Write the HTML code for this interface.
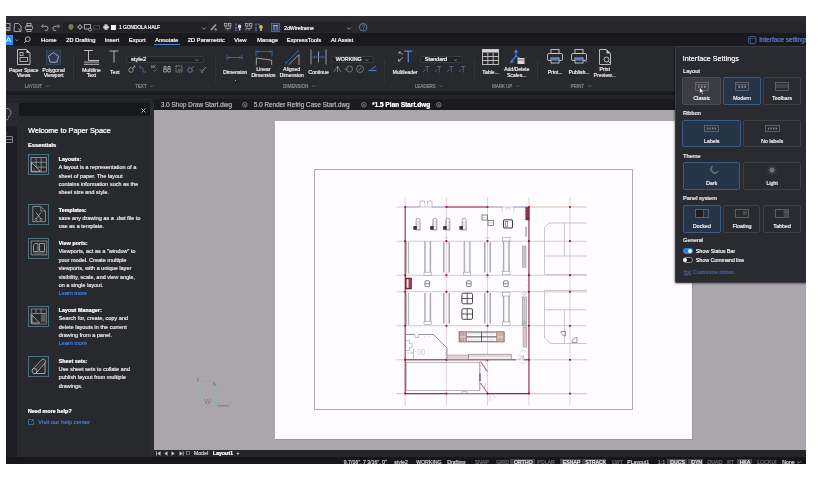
<!DOCTYPE html>
<html><head><meta charset="utf-8">
<style>
html,body{margin:0;padding:0;background:#fff;}
body{width:823px;height:477px;position:relative;overflow:hidden;font-family:"Liberation Sans",sans-serif;}
#app{position:absolute;left:6px;top:16px;width:800px;height:448px;overflow:hidden;background:#28292d;}
#in{will-change:transform;position:absolute;left:-6px;top:-16px;width:823px;height:477px;}
.a{position:absolute;}
.t{position:absolute;white-space:nowrap;line-height:1;text-shadow:0.3px 0 0 currentColor;}
svg{position:absolute;overflow:visible;}
</style></head><body>
<div id="app"><div id="in">
<div class="a" style="left:0px;top:16px;width:823px;height:5px;background:#2d2c31;"></div>
<div class="a" style="left:0px;top:21px;width:823px;height:12px;background:#28272c;"></div>
<div class="a" style="left:0px;top:33px;width:823px;height:13px;background:#1a191e;"></div>
<div class="a" style="left:0px;top:46px;width:823px;height:45px;background:#28292d;"></div>
<div class="a" style="left:0px;top:91px;width:823px;height:4px;background:#191a1f;"></div>
<div class="a" style="left:0px;top:95px;width:823px;height:8px;background:#232428;"></div>
<div class="a" style="left:6px;top:99px;width:146px;height:1px;background:repeating-linear-gradient(90deg,#303136 0 1px,transparent 1px 2px)"></div>
<svg style="left:6px;top:23px;" width="5" height="8" viewBox="0 0 5 8" fill="none"><rect x="-2" y="0.5" width="6" height="7" stroke="#bdbdc0" stroke-width="0.8"/><rect x="0" y="4.5" width="3" height="2" stroke="#bdbdc0" stroke-width="0.6"/></svg>
<svg style="left:14px;top:23px;" width="8" height="9" viewBox="0 0 8 9" fill="none"><path d="M0.5 0.5h4l2.5 2.5v5.5h-7z" stroke="#bdbdc0" stroke-width="0.8"/><path d="M4.5 5.5l2 2.5" stroke="#bdbdc0" stroke-width="0.8"/></svg>
<svg style="left:25px;top:23px;" width="9" height="9" viewBox="0 0 9 9" fill="none"><rect x="2" y="0.5" width="4" height="2.5" stroke="#bdbdc0" stroke-width="0.8"/><rect x="0.5" y="3" width="7" height="3.5" rx="0.8" stroke="#bdbdc0" stroke-width="0.8"/><rect x="2" y="6.5" width="4" height="2" stroke="#bdbdc0" stroke-width="0.8"/></svg>
<div class="a" style="left:37px;top:23px;width:1px;height:9px;background:#2e2e31;"></div>
<svg style="left:41px;top:23px;" width="8" height="8" viewBox="0 0 8 8" fill="none"><path d="M2 1.5L0.6 3.2L2 4.8" stroke="#bdbdc0" stroke-width="0.8"/><path d="M0.8 3.2h4a2.2 2.2 0 0 1 0 4.4h-1" stroke="#bdbdc0" stroke-width="0.8"/></svg>
<svg style="left:52px;top:23px;" width="8" height="8" viewBox="0 0 8 8" fill="none"><path d="M6 1.5L7.4 3.2L6 4.8" stroke="#bdbdc0" stroke-width="0.8"/><path d="M7.2 3.2h-4a2.2 2.2 0 0 0 0 4.4h1" stroke="#bdbdc0" stroke-width="0.8"/></svg>
<div class="a" style="left:63px;top:22px;width:145px;height:10px;background:#222126;"></div>
<svg style="left:68px;top:24px;" width="6" height="6" viewBox="0 0 6 6" fill="none"><ellipse cx="3" cy="2.6" rx="2.6" ry="2.6" fill="#7d7a4e"/><rect x="1.8" y="4.6" width="2.4" height="1.4" fill="#6e6c48"/></svg>
<svg style="left:77px;top:24px;" width="6" height="6" viewBox="0 0 6 6" fill="none"><circle cx="3" cy="3" r="1.6" stroke="#bdbdc0" stroke-width="0.8"/><path d="M3 0v1M3 5v1M0 3h1M5 3h1" stroke="#bdbdc0" stroke-width="0.8"/></svg>
<svg style="left:84px;top:24px;" width="8" height="7" viewBox="0 0 8 7" fill="none"><rect x="0.5" y="0.5" width="6" height="4.5" stroke="#bdbdc0" stroke-width="0.8"/><circle cx="6" cy="5.5" r="1.5" fill="#232326" stroke="#bdbdc0" stroke-width="0.8"/></svg>
<svg style="left:93px;top:25px;" width="7" height="5" viewBox="0 0 7 5" fill="none"><rect x="0.5" y="0.5" width="6" height="4" stroke="#4a4a4e" stroke-width="0.8"/></svg>
<svg style="left:103px;top:24px;" width="6" height="6" viewBox="0 0 6 6" fill="none"><rect x="1.5" y="0.3" width="3" height="2" fill="#d0d0d3"/><rect x="0.2" y="2" width="5.6" height="2.6" rx="0.6" fill="#d0d0d3"/><rect x="1.5" y="4" width="3" height="1.8" fill="#d0d0d3"/></svg>
<div class="a" style="left:111px;top:25px;width:4.5px;height:4.5px;background:#f2f2f2;"></div>
<div class="t" style="left:119px;top:25.88px;font-size:4.75px;color:#f0f0f0;font-weight:400;text-shadow:0.35px 0 0 currentColor">1 GONDOLA HALF</div>
<svg style="left:201.5px;top:27px;" width="4" height="3" viewBox="0 0 4 3" fill="none"><path d="M0.3 0.5L2 2.2L3.7 0.5" stroke="#bdbdc0" stroke-width="0.7"/></svg>
<svg style="left:210px;top:23px;" width="7" height="8" viewBox="0 0 7 8" fill="none"><path d="M1 7L6 1.5" stroke="#9da0c0" stroke-width="1.6"/><path d="M4.5 6.5h2.5M5.7 5.3v2.5" stroke="#c9c27a" stroke-width="0.7"/></svg>
<svg style="left:224px;top:23px;" width="8" height="8" viewBox="0 0 8 8" fill="none"><rect x="0.5" y="0.5" width="2.5" height="2.5" stroke="#bdbdc0" stroke-width="0.7"/><rect x="4.5" y="0.5" width="2.5" height="2.5" stroke="#bdbdc0" stroke-width="0.7"/><path d="M1.8 3v2.5h4.5V3M4 5.5v2" stroke="#bdbdc0" stroke-width="0.7"/></svg>
<svg style="left:235px;top:23px;" width="7" height="8" viewBox="0 0 7 8" fill="none"><rect x="0" y="0.5" width="2" height="2" fill="#5262a8"/><rect x="0" y="4" width="2" height="2" fill="#5262a8"/><rect x="0" y="6.5" width="2" height="1.5" fill="#5262a8"/><ellipse cx="4.6" cy="3.5" rx="1.7" ry="2" fill="#d8d8da"/><rect x="3.8" y="5.5" width="1.6" height="2" fill="#d8d8da"/></svg>
<svg style="left:245px;top:23px;" width="8" height="8" viewBox="0 0 8 8" fill="none"><rect x="0.5" y="0.5" width="2.5" height="2.5" stroke="#bdbdc0" stroke-width="0.7"/><rect x="4.5" y="0.5" width="2.5" height="2.5" stroke="#bdbdc0" stroke-width="0.7"/><path d="M1.8 3v2.5h4.5V3M4 5.5v2" stroke="#bdbdc0" stroke-width="0.7"/><rect x="0" y="5.5" width="2" height="2" fill="#5262a8"/></svg>
<svg style="left:255px;top:23px;" width="9" height="8" viewBox="0 0 9 8" fill="none"><rect x="0" y="0.5" width="2" height="2" fill="#5262a8"/><rect x="3" y="0.5" width="2" height="2" fill="#5262a8"/><rect x="0" y="4" width="2" height="2" fill="#5262a8"/><rect x="0" y="6.5" width="2" height="1.5" fill="#5262a8"/><ellipse cx="6" cy="4" rx="1.8" ry="2" fill="#e0c04a"/><rect x="5.2" y="6" width="1.6" height="1.8" fill="#d8d8da"/></svg>
<div class="a" style="left:268px;top:23px;width:1px;height:9px;background:#2e2e31;"></div>
<svg style="left:271px;top:23px;" width="9" height="9" viewBox="0 0 9 9" fill="none"><rect x="0.5" y="0.5" width="8" height="8" fill="#243a66" stroke="#4b72c0" stroke-width="0.8"/><path d="M2 2.5h5M3 2.5v5M6 2.5v5" stroke="#c8d4f0" stroke-width="0.7"/></svg>
<div class="a" style="left:281px;top:22px;width:70px;height:10px;background:#222126;"></div>
<div class="t" style="left:284px;top:25.5px;font-size:5.2px;color:#f0f0f0;font-weight:400;text-shadow:0.35px 0 0 currentColor">2dWireframe</div>
<svg style="left:346.5px;top:27px;" width="4" height="3" viewBox="0 0 4 3" fill="none"><path d="M0.3 0.5L2 2.2L3.7 0.5" stroke="#bdbdc0" stroke-width="0.7"/></svg>
<div class="a" style="left:356px;top:23px;width:1px;height:9px;background:#2e2e31;"></div>
<svg style="left:359px;top:23px;" width="9" height="9" viewBox="0 0 9 9" fill="none"><circle cx="4.2" cy="4.2" r="3.8" stroke="#6f86c8" stroke-width="0.8"/><path d="M3 3.2a1.3 1.3 0 1 1 1.5 1.3v0.9" stroke="#6f86c8" stroke-width="0.7"/><circle cx="4.5" cy="6.4" r="0.4" fill="#6f86c8"/></svg>
<div class="a" style="left:6px;top:35px;width:7px;height:10px;background:#2f8ff0;"></div>
<svg style="left:6px;top:37px;" width="7" height="6" viewBox="0 0 7 6" fill="none"><path d="M0.3 5L2.5 0.4L4.7 5M1.6 3.6h1" stroke="#e4f4ff" stroke-width="1"/></svg>
<svg style="left:14.5px;top:39px;" width="4" height="3" viewBox="0 0 4 3" fill="none"><path d="M0.3 0.5L1.8 1.8L3.3 0.5" stroke="#8a8a8e" stroke-width="0.8"/></svg>
<svg style="left:23px;top:36px;" width="8" height="8" viewBox="0 0 8 8" fill="none"><circle cx="4.8" cy="3.2" r="2.4" stroke="#c4c4c8" stroke-width="0.9"/><path d="M3.1 4.9L1.1 6.9" stroke="#c4c4c8" stroke-width="1"/></svg>
<div class="t" style="left:41px;top:37.89px;font-size:5.8px;color:#ececee;font-weight:400;text-shadow:0.35px 0 0 currentColor">Home</div>
<div class="t" style="left:66px;top:37.89px;font-size:5.8px;color:#ececee;font-weight:400;text-shadow:0.35px 0 0 currentColor">2D Drafting</div>
<div class="t" style="left:104.6px;top:37.89px;font-size:5.8px;color:#ececee;font-weight:400;text-shadow:0.35px 0 0 currentColor">Insert</div>
<div class="t" style="left:128.7px;top:37.89px;font-size:5.8px;color:#ececee;font-weight:400;text-shadow:0.35px 0 0 currentColor">Export</div>
<div class="t" style="left:155px;top:37.89px;font-size:5.8px;color:#ececee;font-weight:400;text-shadow:0.35px 0 0 currentColor">Annotate</div>
<div class="t" style="left:187.5px;top:37.89px;font-size:5.8px;color:#ececee;font-weight:400;text-shadow:0.35px 0 0 currentColor">2D Parametric</div>
<div class="t" style="left:234px;top:37.89px;font-size:5.8px;color:#ececee;font-weight:400;text-shadow:0.35px 0 0 currentColor">View</div>
<div class="t" style="left:257px;top:37.89px;font-size:5.8px;color:#ececee;font-weight:400;text-shadow:0.35px 0 0 currentColor">Manage</div>
<div class="t" style="left:286.6px;top:37.89px;font-size:5.8px;color:#ececee;font-weight:400;text-shadow:0.35px 0 0 currentColor">ExpressTools</div>
<div class="t" style="left:330.8px;top:37.89px;font-size:5.8px;color:#ececee;font-weight:400;text-shadow:0.35px 0 0 currentColor">AI Assist</div>
<div class="a" style="left:153.5px;top:44px;width:26px;height:1.1px;background:#4a88e0;"></div>
<svg style="left:748.3px;top:36.2px;" width="8.5" height="8" viewBox="0 0 8.5 8" fill="none"><rect x="0.5" y="0.5" width="7.5" height="7" rx="1.2" stroke="#4a5e9a" stroke-width="0.9"/><path d="M0.5 2.3h7.5M2.3 2.3v5.2" stroke="#4a5e9a" stroke-width="0.7"/></svg>
<div class="t" style="left:759px;top:36.98px;font-size:6.4px;color:#5576c4;font-weight:400;text-shadow:0.4px 0 0 currentColor">Interface settings</div>
<svg style="left:17px;top:49px;" width="14" height="16" viewBox="0 0 14 16" fill="none"><path d="M0.5 0.5h9l3.5 3.5v11.5h-12.5z" stroke="#c8c8cb" stroke-width="0.9"/><path d="M9.5 0.5v3.5h3.5z" fill="#c8c8cb"/><rect x="3" y="3.5" width="3" height="3" stroke="#c8c8cb" stroke-width="0.8"/><rect x="3" y="8.5" width="7.5" height="4" stroke="#c8c8cb" stroke-width="0.8"/></svg>
<svg style="left:46px;top:50px;" width="15" height="15" viewBox="0 0 15 15" fill="none"><rect x="0.5" y="0.5" width="14" height="14" fill="#2c384c" stroke="#3a4c6c" stroke-width="0.8"/><path d="M7.5 2.6L12.6 6.3L10.7 12.2H4.3L2.4 6.3Z" stroke="#c0c6d2" stroke-width="0.8"/></svg>
<div class="t" style="left:-176.4px;width:400px;text-align:center;top:67.54px;font-size:5.1px;color:#e4e4e6;font-weight:400;">Paper Space</div>
<div class="t" style="left:-176.4px;width:400px;text-align:center;top:72.74px;font-size:5.1px;color:#e4e4e6;font-weight:400;">Views</div>
<div class="t" style="left:-146.5px;width:400px;text-align:center;top:67.54px;font-size:5.1px;color:#e4e4e6;font-weight:400;">Polygonal</div>
<div class="t" style="left:-146.5px;width:400px;text-align:center;top:72.74px;font-size:5.1px;color:#e4e4e6;font-weight:400;">Viewport</div>
<div class="t" style="left:24.6px;top:84.63px;font-size:4.45px;color:#85858a;font-weight:400;">LAYOUT</div>
<svg style="left:45.9796px;top:85.3px;" width="4" height="3" viewBox="0 0 4 3" fill="none"><path d="M0.3 0.4L1.7 1.8L3.1 0.4" stroke="#8a8a8f" stroke-width="0.65"/></svg>
<div class="a" style="left:73px;top:56px;width:1px;height:26px;background:#33343a;"></div>
<svg style="left:83px;top:49px;" width="17" height="17" viewBox="0 0 17 17" fill="none"><path d="M1 1.5h9M5.5 1.5v10h10.5M1 13h15M1 15.3h15" stroke="#c8c8cb" stroke-width="0.9"/></svg>
<svg style="left:109px;top:50px;" width="10" height="13" viewBox="0 0 10 13" fill="none"><path d="M0.5 1h9M5 1v11.5" stroke="#c8c8cb" stroke-width="0.9"/></svg>
<div class="t" style="left:-108.7px;width:400px;text-align:center;top:67.54px;font-size:5.1px;color:#e4e4e6;font-weight:400;">Multiline</div>
<div class="t" style="left:-108.7px;width:400px;text-align:center;top:72.74px;font-size:5.1px;color:#e4e4e6;font-weight:400;">Text</div>
<div class="t" style="left:-85.3px;width:400px;text-align:center;top:70.24px;font-size:5.1px;color:#e4e4e6;font-weight:400;">Text</div>
<div class="a" style="left:126px;top:56px;width:78px;height:7px;background:#222327;border:1px solid #3a3b40;box-sizing:border-box;border-radius:2px;"></div>
<div class="t" style="left:130.7px;top:56.85px;font-size:5.85px;color:#f0f0f2;font-weight:400;text-shadow:0.45px 0 0 currentColor">style2</div>
<svg style="left:195px;top:58.8px;" width="4" height="3" viewBox="0 0 4 3" fill="none"><path d="M0.3 0.4L1.7 1.8L3.1 0.4" stroke="#bdbdc0" stroke-width="0.65"/></svg>
<svg style="left:128px;top:65px;" width="8" height="8" viewBox="0 0 8 8" fill="none"><circle cx="3" cy="5" r="2.3" stroke="#b8b8bb" stroke-width="0.7"/><path d="M4.6 3.4L7 1M5.5 1H7v1.5" stroke="#b8b8bb" stroke-width="0.7"/></svg>
<svg style="left:139px;top:65px;" width="8" height="8" viewBox="0 0 8 8" fill="none"><path d="M1 1v2h3M4 3v4h3" stroke="#5a6890" stroke-width="0.8"/><circle cx="1" cy="1" r="0.6" fill="#5a6890"/><circle cx="7" cy="7" r="0.6" fill="#5a6890"/></svg>
<svg style="left:151px;top:65px;" width="8" height="8" viewBox="0 0 8 8" fill="none"><text x="0" y="3" font-size="2.6" fill="#b0b0b3" font-family="Liberation Sans">ABC</text><path d="M2 5l1.5 1.5L6.5 3.5" stroke="#707078" stroke-width="0.6"/></svg>
<svg style="left:163px;top:65px;" width="8" height="8" viewBox="0 0 8 8" fill="none"><circle cx="2" cy="5.5" r="1.6" stroke="#c0c0c3" stroke-width="0.8"/><circle cx="6" cy="5.5" r="1.6" stroke="#c0c0c3" stroke-width="0.8"/><path d="M1 4V1.5h2V4M5 4V1.5h2V4" stroke="#c0c0c3" stroke-width="0.8"/></svg>
<svg style="left:175px;top:65px;" width="8" height="8" viewBox="0 0 8 8" fill="none"><rect x="1" y="1" width="6" height="6" stroke="#b8b8bb" stroke-width="0.7" stroke-dasharray="1.5 0.8"/><path d="M3 5h3" stroke="#b8b8bb" stroke-width="0.7"/></svg>
<svg style="left:187px;top:65px;" width="8" height="8" viewBox="0 0 8 8" fill="none"><circle cx="3" cy="5" r="2.3" stroke="#8090b8" stroke-width="0.7"/><path d="M4.6 3.4L7 1" stroke="#8090b8" stroke-width="0.7"/><path d="M1 1l6 6" stroke="#5a6890" stroke-width="0.5"/></svg>
<svg style="left:199px;top:65px;" width="8" height="8" viewBox="0 0 8 8" fill="none"><path d="M1 4.5l2 2L7 2" stroke="#b8b8bb" stroke-width="0.7"/><path d="M3 6.5V8" stroke="#b8b8bb" stroke-width="0.7"/></svg>
<div class="t" style="left:135px;top:84.63px;font-size:4.45px;color:#85858a;font-weight:400;">TEXT</div>
<svg style="left:150.2742px;top:85.3px;" width="4" height="3" viewBox="0 0 4 3" fill="none"><path d="M0.3 0.4L1.7 1.8L3.1 0.4" stroke="#8a8a8f" stroke-width="0.65"/></svg>
<div class="a" style="left:214.8px;top:56px;width:1px;height:26px;background:#33343a;"></div>
<svg style="left:226px;top:54px;" width="17" height="7" viewBox="0 0 17 7" fill="none"><path d="M1 3.5h15M1 0.8v5.4M16 0.8v5.4" stroke="#3b6cc0" stroke-width="0.8"/><path d="M1.5 3.5l2.3-1.3v2.6zM15.5 3.5l-2.3-1.3v2.6z" fill="#3b6cc0"/></svg>
<div class="t" style="left:35px;width:400px;text-align:center;top:69.54px;font-size:5.1px;color:#e4e4e6;font-weight:400;">Dimension</div>
<div class="a" style="left:234.5px;top:79.6px;width:1.2px;height:1.2px;background:#aaaaae;"></div>
<svg style="left:255px;top:49px;" width="18" height="17" viewBox="0 0 18 17" fill="none"><path d="M1 2.5h16M1 0.5v7M17 0.5v7" stroke="#3b6cc0" stroke-width="0.8"/><path d="M1.5 2.5l2.3-1.3v2.6zM16.5 2.5l-2.3-1.3v2.6z" fill="#3b6cc0"/><path d="M1.3 16V9L16.7 11.2V16" stroke="#bcbcc0" stroke-width="0.8"/></svg>
<div class="t" style="left:63.30000000000001px;width:400px;text-align:center;top:67.24px;font-size:5.1px;color:#e4e4e6;font-weight:400;">Linear</div>
<div class="t" style="left:63.30000000000001px;width:400px;text-align:center;top:72.74px;font-size:5.1px;color:#e4e4e6;font-weight:400;">Dimension</div>
<svg style="left:284px;top:49px;" width="16" height="17" viewBox="0 0 16 17" fill="none"><path d="M2 14L14 2" stroke="#3b6cc0" stroke-width="0.8"/><path d="M0.8 12.8l2.4 2.4M12.8 0.8l2.4 2.4" stroke="#3b6cc0" stroke-width="0.8"/><path d="M5 15.5L15 5.5V16" stroke="#bcbcc0" stroke-width="0.8"/></svg>
<div class="t" style="left:91.5px;width:400px;text-align:center;top:67.24px;font-size:5.1px;color:#e4e4e6;font-weight:400;">Aligned</div>
<div class="t" style="left:91.5px;width:400px;text-align:center;top:72.74px;font-size:5.1px;color:#e4e4e6;font-weight:400;">Dimension</div>
<svg style="left:310px;top:49px;" width="17" height="16" viewBox="0 0 17 16" fill="none"><path d="M1 0.5v15M8.5 2.5v11M16 0.5v15" stroke="#b4b4b8" stroke-width="0.8"/><path d="M1 8h15" stroke="#3b6cc0" stroke-width="0.8"/><path d="M4.5 6.5v3M12 6.5v3" stroke="#3b6cc0" stroke-width="0.7"/></svg>
<div class="t" style="left:118.5px;width:400px;text-align:center;top:69.54px;font-size:5.1px;color:#e4e4e6;font-weight:400;">Continue</div>
<div class="a" style="left:331px;top:56px;width:43px;height:7px;background:#222327;border:1px solid #3a3b40;box-sizing:border-box;border-radius:2px;"></div>
<div class="t" style="left:335.5px;top:57.31px;font-size:5.3px;color:#f0f0f2;font-weight:400;text-shadow:0.45px 0 0 currentColor">WORKING</div>
<svg style="left:365px;top:58.8px;" width="4" height="3" viewBox="0 0 4 3" fill="none"><path d="M0.3 0.4L1.7 1.8L3.1 0.4" stroke="#bdbdc0" stroke-width="0.65"/></svg>
<svg style="left:333px;top:65px;" width="9" height="8" viewBox="0 0 9 8" fill="none"><path d="M1 7L4.5 1L8 7M4.5 1v6" stroke="#8e8e92" stroke-width="0.7"/></svg>
<svg style="left:344px;top:65px;" width="9" height="8" viewBox="0 0 9 8" fill="none"><circle cx="5.5" cy="4" r="3" stroke="#8e8e92" stroke-width="0.7"/><path d="M0.5 4h3" stroke="#8e8e92" stroke-width="0.7"/></svg>
<svg style="left:356px;top:65px;" width="8" height="8" viewBox="0 0 8 8" fill="none"><circle cx="4" cy="4" r="3.5" stroke="#8e8e92" stroke-width="0.7"/><path d="M2.5 5.5l3-3" stroke="#8e8e92" stroke-width="0.7"/></svg>
<svg style="left:368px;top:65px;" width="9" height="8" viewBox="0 0 9 8" fill="none"><path d="M0.5 5.5h8" stroke="#3d7fe0" stroke-width="1.2"/><path d="M3 4.5L8 1" stroke="#8e8e92" stroke-width="0.7"/></svg>
<div class="t" style="left:283px;top:84.63px;font-size:4.45px;color:#85858a;font-weight:400;">DIMENSION</div>
<svg style="left:312.11814999999996px;top:85.3px;" width="4" height="3" viewBox="0 0 4 3" fill="none"><path d="M0.3 0.4L1.7 1.8L3.1 0.4" stroke="#8a8a8f" stroke-width="0.65"/></svg>
<div class="a" style="left:384px;top:60px;width:1px;height:22px;background:#33343a;"></div>
<svg style="left:397px;top:50px;" width="16" height="13" viewBox="0 0 16 13" fill="none"><path d="M7.2 1.2h8.2M11.3 1.2v11.2" stroke="#4a88d8" stroke-width="1.3"/><path d="M6 4.5L2 2M2 2h2M2 2v2M6 7.5L1.5 11M1.5 11h2M1.5 11V9" stroke="#c8c8cb" stroke-width="0.7"/></svg>
<div class="t" style="left:205px;width:400px;text-align:center;top:69.54px;font-size:5.1px;color:#e4e4e6;font-weight:400;">Multileader</div>
<div class="a" style="left:420px;top:56px;width:43px;height:7px;background:#222327;border:1px solid #3a3b40;box-sizing:border-box;border-radius:2px;"></div>
<div class="t" style="left:424.6px;top:57.14px;font-size:5.5px;color:#f0f0f2;font-weight:400;text-shadow:0.45px 0 0 currentColor">Standard</div>
<svg style="left:454px;top:58.8px;" width="4" height="3" viewBox="0 0 4 3" fill="none"><path d="M0.3 0.4L1.7 1.8L3.1 0.4" stroke="#bdbdc0" stroke-width="0.65"/></svg>
<svg style="left:422px;top:65px;" width="8" height="8" viewBox="0 0 8 8" fill="none"><path d="M3 1.5h4.5M5.3 1.5v6M1 7l2.5-2.5" stroke="#5a6890" stroke-width="0.8"/></svg>
<svg style="left:434px;top:65px;" width="8" height="8" viewBox="0 0 8 8" fill="none"><path d="M3 1.5h4.5M5.3 1.5v6M1 7l2.5-2.5" stroke="#5a6890" stroke-width="0.8"/></svg>
<svg style="left:446px;top:65px;" width="8" height="8" viewBox="0 0 8 8" fill="none"><path d="M3 1.5h4.5M5.3 1.5v6M1 7l2.5-2.5" stroke="#5a6890" stroke-width="0.8"/></svg>
<svg style="left:458px;top:65px;" width="8" height="8" viewBox="0 0 8 8" fill="none"><path d="M3 1.5h4.5M5.3 1.5v6M1 7l2.5-2.5" stroke="#5a6890" stroke-width="0.8"/></svg>
<div class="t" style="left:414.8px;top:84.63px;font-size:4.45px;color:#85858a;font-weight:400;">LEADERS</div>
<svg style="left:439.47704999999996px;top:85.3px;" width="4" height="3" viewBox="0 0 4 3" fill="none"><path d="M0.3 0.4L1.7 1.8L3.1 0.4" stroke="#8a8a8f" stroke-width="0.65"/></svg>
<div class="a" style="left:473.7px;top:60px;width:1px;height:22px;background:#33343a;"></div>
<svg style="left:482px;top:49px;" width="17" height="16" viewBox="0 0 17 16" fill="none"><rect x="0.5" y="0.5" width="16" height="15" stroke="#c8c8cb" stroke-width="0.9"/><rect x="0.5" y="0.5" width="16" height="3" fill="#d8d8da"/><path d="M0.5 7.5h16M0.5 11.5h16M5.8 3.5v12M11.2 3.5v12" stroke="#c8c8cb" stroke-width="0.9"/></svg>
<div class="t" style="left:290.5px;width:400px;text-align:center;top:69.54px;font-size:5.1px;color:#e4e4e6;font-weight:400;">Table...</div>
<svg style="left:509px;top:48px;" width="16" height="17" viewBox="0 0 16 17" fill="none"><path d="M7 2v6L2 14" stroke="#3d7fe0" stroke-width="1.3"/><path d="M4.5 4.5L7 1.5L9.5 4.5z" fill="#3d7fe0"/><path d="M1 15.5l4-1.5-2.5-2.5z" fill="#3d7fe0"/><path d="M7 8l5 3" stroke="#3d7fe0" stroke-width="1.3"/><rect x="8.5" y="10" width="7" height="6" fill="#d8d8da"/><path d="M8.5 12h7" stroke="#28292d" stroke-width="0.6"/></svg>
<div class="t" style="left:316.70000000000005px;width:400px;text-align:center;top:67.24px;font-size:5.1px;color:#e4e4e6;font-weight:400;">Add/Delete</div>
<div class="t" style="left:316.70000000000005px;width:400px;text-align:center;top:72.74px;font-size:5.1px;color:#e4e4e6;font-weight:400;">Scales...</div>
<div class="t" style="left:492px;top:84.63px;font-size:4.45px;color:#85858a;font-weight:400;">MARK UP</div>
<svg style="left:516.1741999999999px;top:85.3px;" width="4" height="3" viewBox="0 0 4 3" fill="none"><path d="M0.3 0.4L1.7 1.8L3.1 0.4" stroke="#8a8a8f" stroke-width="0.65"/></svg>
<div class="a" style="left:537.4px;top:60px;width:1px;height:22px;background:#33343a;"></div>
<svg style="left:547px;top:49px;" width="16" height="15" viewBox="0 0 16 15" fill="none"><rect x="4" y="0.5" width="8" height="4" stroke="#c8c8cb" stroke-width="0.9"/><rect x="0.5" y="4.5" width="15" height="7" rx="1.5" stroke="#c8c8cb" stroke-width="0.9"/><rect x="4" y="9" width="8" height="5" fill="#28292d" stroke="#c8c8cb" stroke-width="0.9"/><rect x="4.5" y="9.5" width="7" height="2" fill="#3d8ff0"/></svg>
<svg style="left:571px;top:49px;" width="16" height="15" viewBox="0 0 16 15" fill="none"><rect x="4" y="0.5" width="8" height="4" stroke="#c8c8cb" stroke-width="0.9"/><rect x="0.5" y="4.5" width="15" height="7" rx="1.5" stroke="#c8c8cb" stroke-width="0.9"/><rect x="4" y="9" width="8" height="5" fill="#28292d" stroke="#c8c8cb" stroke-width="0.9"/><rect x="4.5" y="9.5" width="7" height="2" fill="#3d8ff0"/><path d="M13 12.5h3M14.8 11l1.3 1.5-1.3 1.5" stroke="#3d7fe0" stroke-width="0.6"/></svg>
<svg style="left:599px;top:49px;" width="13" height="16" viewBox="0 0 13 16" fill="none"><path d="M0.5 0.5h7l4 4v11h-11z" stroke="#c8c8cb" stroke-width="0.9"/><path d="M7.5 0.5v4h4" fill="#c8c8cb"/><circle cx="7.5" cy="10.5" r="2.5" stroke="#c8c8cb" stroke-width="0.9"/><path d="M9.3 12.3l2.2 2.2" stroke="#c8c8cb" stroke-width="0.9"/></svg>
<div class="t" style="left:355px;width:400px;text-align:center;top:69.94px;font-size:5.1px;color:#e4e4e6;font-weight:400;">Print...</div>
<div class="t" style="left:379px;width:400px;text-align:center;top:69.94px;font-size:5.1px;color:#e4e4e6;font-weight:400;">Publish...</div>
<div class="t" style="left:404.6px;width:400px;text-align:center;top:66.54px;font-size:5.1px;color:#e4e4e6;font-weight:400;">Print</div>
<div class="t" style="left:404.6px;width:400px;text-align:center;top:72.74px;font-size:5.1px;color:#e4e4e6;font-weight:400;">Preview...</div>
<div class="t" style="left:570.6px;top:84.63px;font-size:4.45px;color:#85858a;font-weight:400;">PRINT</div>
<svg style="left:587.85px;top:85.3px;" width="4" height="3" viewBox="0 0 4 3" fill="none"><path d="M0.3 0.4L1.7 1.8L3.1 0.4" stroke="#8a8a8f" stroke-width="0.65"/></svg>
<div class="a" style="left:0px;top:103px;width:19px;height:23px;background:#2a2b2f;"></div>
<div class="a" style="left:0px;top:126px;width:17px;height:331px;background:#1e1f22;"></div>
<svg style="left:2px;top:108px;" width="10" height="13" viewBox="0 0 10 13" fill="none"><path d="M3 10V8.3C1 7 0.6 5.6 0.6 4.6A4.2 4.2 0 0 1 9 4.6C9 5.6 8.6 7 6.6 8.3V10" stroke="#9a9a9e" stroke-width="0.9"/><path d="M3.2 11.6h3.2" stroke="#9a9a9e" stroke-width="0.8"/></svg>
<svg style="left:2px;top:131px;" width="10" height="13" viewBox="0 0 10 13" fill="none"><path d="M4 1v2.5" stroke="#8a8a8e" stroke-width="0.9"/><path d="M0 5.5h10.5V11.5H0M0 8.5h10.5" stroke="#8a8a8e" stroke-width="0.9"/></svg>
<div class="a" style="left:19px;top:103px;width:131px;height:13px;background:#17181c;"></div>
<div class="a" style="left:17px;top:116px;width:133px;height:341px;background:#28292d;"></div>
<div class="a" style="left:150px;top:103px;width:4px;height:354px;background:#2a2b2f;"></div>
<svg style="left:140.5px;top:108px;" width="5" height="5" viewBox="0 0 5 5" fill="none"><path d="M0.5 0.5l4 4M4.5 0.5l-4 4" stroke="#d0d0d3" stroke-width="0.8"/></svg>
<div class="t" style="left:27.9px;top:127.32px;font-size:7.3px;color:#f0f0f2;font-weight:400;text-shadow:0.45px 0 0 currentColor">Welcome to Paper Space</div>
<div class="t" style="left:27.9px;top:143.37px;font-size:5.7px;color:#ececee;font-weight:700;">Essentials</div>
<div class="a" style="left:28px;top:153.7px;width:21px;height:21px;background:transparent;border:1px solid #4b7080;box-sizing:border-box;border-radius:0px;"></div>
<svg style="left:28px;top:153.7px;" width="21" height="21" viewBox="0 0 21 21" fill="none"><rect x="3" y="3.5" width="15.3" height="14.5" stroke="#b4b4b8" stroke-width="0.7"/><path d="M3 8.3h15.3M3 13.2h15.3M8.1 3.5v14.5M13.2 3.5v14.5" stroke="#a8a8ac" stroke-width="0.7"/><path d="M3.5 8.5V17.3H12.5Z" stroke="#c4c4c8" stroke-width="0.8" fill="#28292d"/><path d="M5.5 13.5V15.5H7.5Z" fill="#6a6a6e"/></svg>
<div class="t" style="left:58.5px;top:157.03px;font-size:5.4px;color:#ececee;font-weight:700;">Layouts:</div>
<div class="t" style="left:58.5px;top:165.25px;font-size:5.55px;color:#e0e0e3;font-weight:400;">A layout is a representation of a</div>
<div class="t" style="left:58.5px;top:173.6px;font-size:5.55px;color:#e0e0e3;font-weight:400;">sheet of paper. The layout</div>
<div class="t" style="left:58.5px;top:181.95px;font-size:5.55px;color:#e0e0e3;font-weight:400;">contains information such as the</div>
<div class="t" style="left:58.5px;top:190.3px;font-size:5.55px;color:#e0e0e3;font-weight:400;">sheet size and style.</div>
<div class="a" style="left:28px;top:204.2px;width:21px;height:21px;background:transparent;border:1px solid #4b7080;box-sizing:border-box;border-radius:0px;"></div>
<svg style="left:28px;top:204.2px;" width="21" height="21" viewBox="0 0 21 21" fill="none"><path d="M4.8 2.5h8l4.6 4.6v10.6H4.8z" stroke="#b4b4b8" stroke-width="0.7"/><path d="M12.8 2.5v4.6h4.6" stroke="#b4b4b8" stroke-width="0.6"/><path d="M8 8.5l5 6.5M13 8.5l-5 6.5" stroke="#b4b4b8" stroke-width="0.8"/><circle cx="8" cy="15.5" r="1.1" stroke="#b4b4b8" stroke-width="0.6"/><circle cx="13" cy="15.5" r="1.1" stroke="#b4b4b8" stroke-width="0.6"/></svg>
<div class="t" style="left:58.5px;top:207.53px;font-size:5.4px;color:#ececee;font-weight:700;">Templates:</div>
<div class="t" style="left:58.5px;top:215.75px;font-size:5.55px;color:#e0e0e3;font-weight:400;">save any drawing as a .dwt file to</div>
<div class="t" style="left:58.5px;top:224.1px;font-size:5.55px;color:#e0e0e3;font-weight:400;">use as a template.</div>
<div class="a" style="left:28px;top:237.7px;width:21px;height:21px;background:transparent;border:1px solid #4b7080;box-sizing:border-box;border-radius:0px;"></div>
<svg style="left:28px;top:237.7px;" width="21" height="21" viewBox="0 0 21 21" fill="none"><rect x="3.2" y="3" width="15.6" height="13.9" stroke="#a8a8ac" stroke-width="0.7"/><path d="M5.5 13.5V7.5L7 5.5h3v8zM11.5 13.5V5.5h5v8z" stroke="#b4b4b8" stroke-width="0.75"/><path d="M5.5 15h11" stroke="#a8a8ac" stroke-width="0.6"/></svg>
<div class="t" style="left:58.5px;top:241.23px;font-size:5.4px;color:#ececee;font-weight:700;">View ports:</div>
<div class="t" style="left:58.5px;top:249.45px;font-size:5.55px;color:#e0e0e3;font-weight:400;">Viewports, act as a "window" to</div>
<div class="t" style="left:58.5px;top:257.8px;font-size:5.55px;color:#e0e0e3;font-weight:400;">your model. Create multiple</div>
<div class="t" style="left:58.5px;top:266.15px;font-size:5.55px;color:#e0e0e3;font-weight:400;">viewports, with a unique layer</div>
<div class="t" style="left:58.5px;top:274.5px;font-size:5.55px;color:#e0e0e3;font-weight:400;">visibility, scale, and view angle,</div>
<div class="t" style="left:58.5px;top:282.85px;font-size:5.55px;color:#e0e0e3;font-weight:400;">on a single layout.</div>
<div class="t" style="left:58.5px;top:291.2px;font-size:5.55px;color:#3f7ad8;font-weight:400;">Learn more</div>
<div class="a" style="left:28px;top:305.5px;width:21px;height:21px;background:transparent;border:1px solid #4b7080;box-sizing:border-box;border-radius:0px;"></div>
<svg style="left:28px;top:305.5px;" width="21" height="21" viewBox="0 0 21 21" fill="none"><rect x="3.2" y="3" width="15" height="15" stroke="#a8a8ac" stroke-width="0.6"/><path d="M3.2 7.5h15M8 3v4.5M13 3v4.5M3.2 7.5V17" stroke="#a8a8ac" stroke-width="0.7"/><path d="M4 9l7.5 8H4z" stroke="#c0c0c4" stroke-width="0.75"/><path d="M13 9h4.5M13 11h4.5M13 13h4.5M13 15h4.5" stroke="#a8a8ac" stroke-width="0.8"/></svg>
<div class="t" style="left:58.5px;top:307.93px;font-size:5.4px;color:#ececee;font-weight:700;">Layout Manager:</div>
<div class="t" style="left:58.5px;top:316.15px;font-size:5.55px;color:#e0e0e3;font-weight:400;">Search for, create, copy and</div>
<div class="t" style="left:58.5px;top:324.5px;font-size:5.55px;color:#e0e0e3;font-weight:400;">delete layouts in the current</div>
<div class="t" style="left:58.5px;top:332.85px;font-size:5.55px;color:#e0e0e3;font-weight:400;">drawing from a panel.</div>
<div class="t" style="left:58.5px;top:341.2px;font-size:5.55px;color:#3f7ad8;font-weight:400;">Learn more</div>
<div class="a" style="left:28px;top:356px;width:21px;height:21px;background:transparent;border:1px solid #4b7080;box-sizing:border-box;border-radius:0px;"></div>
<svg style="left:28px;top:356px;" width="21" height="21" viewBox="0 0 21 21" fill="none"><circle cx="6.5" cy="15" r="2.5" stroke="#c0c0c4" stroke-width="0.8"/><path d="M4.5 13.5L13.5 4a2.3 2.3 0 0 1 3.5 3L8 17.2" stroke="#c0c0c4" stroke-width="0.8"/><path d="M17 6.5v11H6.5" stroke="#c0c0c4" stroke-width="0.8"/><path d="M6.5 15l9-9.5" stroke="#8a8a8e" stroke-width="0.5"/></svg>
<div class="t" style="left:58.5px;top:358.73px;font-size:5.4px;color:#ececee;font-weight:700;">Sheet sets:</div>
<div class="t" style="left:58.5px;top:366.95px;font-size:5.55px;color:#e0e0e3;font-weight:400;">Use sheet sets to collate and</div>
<div class="t" style="left:58.5px;top:375.3px;font-size:5.55px;color:#e0e0e3;font-weight:400;">publish layout from multiple</div>
<div class="t" style="left:58.5px;top:383.65px;font-size:5.55px;color:#e0e0e3;font-weight:400;">drawings.</div>
<div class="t" style="left:27.7px;top:408.93px;font-size:5.4px;color:#ececee;font-weight:700;">Need more help?</div>
<svg style="left:28px;top:419px;" width="6" height="6" viewBox="0 0 6 6" fill="none"><path d="M3 0.5H0.5v5h5V3M3 3l2.5-2.5M3.5 0.5h2v2" stroke="#3f7ad8" stroke-width="0.7"/></svg>
<div class="t" style="left:38px;top:419.91px;font-size:5.9px;color:#3f78d4;font-weight:400;">Visit our help center</div>
<div class="a" style="left:154px;top:99px;width:669px;height:11px;background:#1a1b1f;"></div>
<div class="t" style="left:160.7px;top:102.18px;font-size:6.4px;color:#a8a8ac;font-weight:400;">3.0 Shop Draw Start.dwg</div>
<svg style="left:241.5px;top:102.3px;" width="6" height="6" viewBox="0 0 6 6" fill="none"><circle cx="2.8" cy="2.8" r="2.3" stroke="#8a8a8e" stroke-width="0.8"/><path d="M1.8 1.8l2 2M3.8 1.8l-2 2" stroke="#8a8a8e" stroke-width="0.7"/></svg>
<div class="t" style="left:253.6px;top:102.18px;font-size:6.4px;color:#a8a8ac;font-weight:400;">5.0 Render Refrig Case Start.dwg</div>
<svg style="left:360.5px;top:102.3px;" width="6" height="6" viewBox="0 0 6 6" fill="none"><circle cx="2.8" cy="2.8" r="2.3" stroke="#8a8a8e" stroke-width="0.8"/><path d="M1.8 1.8l2 2M3.8 1.8l-2 2" stroke="#8a8a8e" stroke-width="0.7"/></svg>
<div class="t" style="left:372px;top:102.14px;font-size:6.45px;color:#f4f4f6;font-weight:700;">*1.5 Plan Start.dwg</div>
<svg style="left:435.7px;top:102.3px;" width="6" height="6" viewBox="0 0 6 6" fill="none"><circle cx="2.8" cy="2.8" r="2.3" stroke="#8a8a8e" stroke-width="0.8"/><path d="M1.8 1.8l2 2M3.8 1.8l-2 2" stroke="#8a8a8e" stroke-width="0.7"/></svg>
<div class="a" style="left:154px;top:110px;width:669px;height:340px;background:#aba5ac;"></div>
<div class="a" style="left:275px;top:121px;width:416.5px;height:318px;background:#fefcfe;box-shadow:0.6px 0.6px 0 #8f8a90"></div>
<div class="a" style="left:314px;top:169px;width:319px;height:241px;background:transparent;border:1px solid #aeaaaf;box-sizing:border-box;border-radius:0px;"></div>
<svg style="left:190px;top:370px;" width="45" height="40" viewBox="0 0 45 40" fill="none"><path d="M8 7v5" stroke="#7a767b" stroke-width="0.8"/><path d="M8 12v24" stroke="#8fb5ad" stroke-width="1.2"/><path d="M8 11.5h18" stroke="#a09ca1" stroke-width="0.5"/><path d="M26.7 15v21" stroke="#8fb5ad" stroke-width="1.2"/><path d="M27 35.8h12" stroke="#7d797e" stroke-width="1"/><path d="M8 36h18" stroke="#a39fa4" stroke-width="0.4"/><path d="M23.6 15.2v-3.2l2.6 3.2z" stroke="#6a666b" stroke-width="0.6"/><text x="14.3" y="33.6" font-size="7.2" fill="#79757a" font-family="Liberation Sans">W</text></svg>
<svg style="left:390px;top:190px;" width="210" height="220" viewBox="0 0 210 220" fill="none"><g transform="translate(-390,-190)"><path d="M405.2 197.5L405.2 406" stroke="#d2ccd2" stroke-width="0.8" /><path d="M446.4 197.5L446.4 406" stroke="#d2ccd2" stroke-width="0.8" /><path d="M487.5 197.5L487.5 406" stroke="#d2ccd2" stroke-width="0.8" /><path d="M528.9 197.5L528.9 406" stroke="#d2ccd2" stroke-width="0.8" /><path d="M570 197.5L570 406" stroke="#d2ccd2" stroke-width="0.8" /><path d="M396.5 207L587 207" stroke="#d2ccd2" stroke-width="1.1" /><path d="M396.5 241.2L587 241.2" stroke="#d2ccd2" stroke-width="1.1" /><path d="M396.5 275.2L587 275.2" stroke="#d2ccd2" stroke-width="1.1" /><path d="M396.5 291.8L587 291.8" stroke="#d2ccd2" stroke-width="1.1" /><path d="M396.5 325.8L587 325.8" stroke="#d2ccd2" stroke-width="1.1" /><path d="M396.5 359.8L587 359.8" stroke="#d2ccd2" stroke-width="1.1" /><path d="M396.5 393.6L587 393.6" stroke="#d2ccd2" stroke-width="1.1" /><path d="M529 207L587 207" stroke="#e8dcc0" stroke-width="1.1" /><path d="M545 291.8L587 291.8" stroke="#e8dcc0" stroke-width="1.1" /><path d="M587 223H549L544.5 227.5V274.6H587" stroke="#bdb8bd" stroke-width="0.8" fill="none"/><path d="M564.4 223V256M544.5 256H587" stroke="#bdb8bd" stroke-width="0.8" fill="none"/><path d="M587 290.4H544.5V338L550.5 343.5H587" stroke="#bdb8bd" stroke-width="0.8" fill="none"/><path d="M544.5 309.8H587M564.4 309.8V343.5" stroke="#bdb8bd" stroke-width="0.8" fill="none"/><path d="M561 331.5h4.5v4.5M561 331.5a4.5 4.5 0 0 0 4.5 4.5" stroke="#555" stroke-width="0.6" fill="none"/><path d="M572 342.5h5v-5M577 337.5a5 5 0 0 0 -5 5" stroke="#555" stroke-width="0.6" fill="none"/><path d="M405.2 207L420 207" stroke="#a6a8d2" stroke-width="1.0" /><path d="M432 207L446.4 207" stroke="#a6a8d2" stroke-width="1.0" /><path d="M446.4 207L487.5 207" stroke="#962444" stroke-width="1.0" /><path d="M487.5 207L502 207" stroke="#a6a8d2" stroke-width="1.0" /><path d="M514 207L528.9 207" stroke="#a6a8d2" stroke-width="1.0" /><path d="M502 207v5.5M514 207v5.5M507 207v2.5M509.5 207v2.5" stroke="#9a9a9e" stroke-width="0.5" fill="none"/><path d="M420 207v-6h4.5v3M427.5 204v-3h4.5v6" stroke="#8a8a8e" stroke-width="0.5" fill="none"/><path d="M424 207l1.5-2.5M428 207l-0.5-2.5" stroke="#aaa" stroke-width="0.4" fill="none"/><path d="M405.2 207L405.2 393.6" stroke="#962444" stroke-width="1.0" /><path d="M528.9 207L528.9 393.6" stroke="#962444" stroke-width="1.0" /><path d="M405.2 359.8L487.5 359.8" stroke="#962444" stroke-width="1.0" /><path d="M487.5 359.8L516 359.8" stroke="#5a4a50" stroke-width="0.9" /><path d="M524 359.8L528.9 359.8" stroke="#962444" stroke-width="1.0" /><path d="M405.2 393.6L446.4 393.6" stroke="#9a3458" stroke-width="1.3" /><path d="M446.4 393.6L487.5 393.6" stroke="#a868c8" stroke-width="1.3" /><path d="M462 393.6v-2h5v2" stroke="#a868c8" stroke-width="0.5" fill="none"/><path d="M487.5 393.6L528.9 393.6" stroke="#962444" stroke-width="1.1" /><rect x="525.8" y="207.5" width="3.4" height="12.5" rx="0" stroke="#7a1c36" stroke-width="0.4" fill="#86243e"/><path d="M526.6 210h1.8M526.6 213h1.8M526.6 216h1.8" stroke="#d8b0c0" stroke-width="0.45" fill="none"/><path d="M526 226.5L526 236.5" stroke="#444" stroke-width="0.7" /><circle cx="405.2" cy="207" r="1.1" fill="#981c3c"/><circle cx="405.2" cy="241.2" r="1.1" fill="#981c3c"/><circle cx="405.2" cy="275.2" r="1.1" fill="#981c3c"/><circle cx="405.2" cy="291.8" r="1.1" fill="#981c3c"/><circle cx="405.2" cy="325.8" r="1.1" fill="#981c3c"/><circle cx="405.2" cy="359.8" r="1.1" fill="#981c3c"/><circle cx="405.2" cy="393.6" r="1.1" fill="#981c3c"/><circle cx="446.4" cy="207" r="1.1" fill="#981c3c"/><circle cx="446.4" cy="241.2" r="1.1" fill="#981c3c"/><circle cx="446.4" cy="275.2" r="1.1" fill="#981c3c"/><circle cx="446.4" cy="291.8" r="1.1" fill="#981c3c"/><circle cx="446.4" cy="325.8" r="1.1" fill="#981c3c"/><circle cx="446.4" cy="359.8" r="1.1" fill="#981c3c"/><circle cx="446.4" cy="393.6" r="1.1" fill="#981c3c"/><circle cx="487.5" cy="207" r="1.1" fill="#981c3c"/><circle cx="487.5" cy="241.2" r="1.1" fill="#981c3c"/><circle cx="487.5" cy="275.2" r="1.1" fill="#981c3c"/><circle cx="487.5" cy="291.8" r="1.1" fill="#981c3c"/><circle cx="487.5" cy="325.8" r="1.1" fill="#981c3c"/><circle cx="487.5" cy="359.8" r="1.1" fill="#981c3c"/><circle cx="487.5" cy="393.6" r="1.1" fill="#981c3c"/><circle cx="528.9" cy="207" r="1.1" fill="#981c3c"/><circle cx="528.9" cy="241.2" r="1.1" fill="#981c3c"/><circle cx="528.9" cy="275.2" r="1.1" fill="#981c3c"/><circle cx="528.9" cy="291.8" r="1.1" fill="#981c3c"/><circle cx="528.9" cy="325.8" r="1.1" fill="#981c3c"/><circle cx="528.9" cy="359.8" r="1.1" fill="#981c3c"/><circle cx="528.9" cy="393.6" r="1.1" fill="#981c3c"/><circle cx="570" cy="207" r="1.1" fill="#981c3c"/><circle cx="570" cy="241.2" r="1.1" fill="#981c3c"/><circle cx="570" cy="275.2" r="1.1" fill="#981c3c"/><circle cx="570" cy="291.8" r="1.1" fill="#981c3c"/><circle cx="570" cy="325.8" r="1.1" fill="#981c3c"/><circle cx="570" cy="359.8" r="1.1" fill="#981c3c"/><circle cx="570" cy="393.6" r="1.1" fill="#981c3c"/><path d="M416.1 229.8V220.3a2 2 0 0 1 4 0V229.8z" stroke="#666" stroke-width="0.6" fill="none"/><path d="M417.1 221v7.5M419.1 221v7.5" stroke="#999" stroke-width="0.4" fill="none"/><rect x="413.7" y="226.2" width="3" height="3.4" rx="0" stroke="#2a2a2a" stroke-width="0.4" fill="#333"/><path d="M413.7 229.8h7" stroke="#777" stroke-width="0.4" fill="none"/><path d="M432.8 229.8V220.3a2 2 0 0 1 4 0V229.8z" stroke="#666" stroke-width="0.6" fill="none"/><path d="M433.8 221v7.5M435.8 221v7.5" stroke="#999" stroke-width="0.4" fill="none"/><rect x="430.4" y="226.2" width="3" height="3.4" rx="0" stroke="#2a2a2a" stroke-width="0.4" fill="#333"/><path d="M430.4 229.8h7" stroke="#777" stroke-width="0.4" fill="none"/><path d="M445.8 229.8V220.3a2 2 0 0 1 4 0V229.8z" stroke="#666" stroke-width="0.6" fill="none"/><path d="M446.8 221v7.5M448.8 221v7.5" stroke="#999" stroke-width="0.4" fill="none"/><rect x="443.4" y="226.2" width="3" height="3.4" rx="0" stroke="#2a2a2a" stroke-width="0.4" fill="#333"/><path d="M443.4 229.8h7" stroke="#777" stroke-width="0.4" fill="none"/><path d="M462.2 229.8V220.3a2 2 0 0 1 4 0V229.8z" stroke="#666" stroke-width="0.6" fill="none"/><path d="M463.2 221v7.5M465.2 221v7.5" stroke="#999" stroke-width="0.4" fill="none"/><rect x="459.79999999999995" y="226.2" width="3" height="3.4" rx="0" stroke="#2a2a2a" stroke-width="0.4" fill="#333"/><path d="M459.79999999999995 229.8h7" stroke="#777" stroke-width="0.4" fill="none"/><rect x="482" y="215" width="5.5" height="5" rx="0" stroke="#555" stroke-width="0.7" fill="none"/><path d="M483 217.5L486.5 217.5" stroke="#888" stroke-width="0.4" /><rect x="488" y="220.3" width="5.5" height="5" rx="0" stroke="#555" stroke-width="0.7" fill="none"/><path d="M489 222.8L492.5 222.8" stroke="#888" stroke-width="0.4" /><rect x="503.5" y="219.7" width="9" height="8.3" rx="1.2" stroke="#3a3a3a" stroke-width="1.1" fill="none"/><rect x="505.2" y="221.5" width="2.5" height="4.8" rx="0" stroke="#555" stroke-width="0.6" fill="none"/><path d="M424.8 241.5L424.8 272.2" stroke="#5a5a5e" stroke-width="0.55" /><path d="M425.59999999999997 241.5L425.59999999999997 272.2" stroke="#9a9a9e" stroke-width="0.4" /><path d="M430.59999999999997 241.5L430.59999999999997 272.2" stroke="#5a5a5e" stroke-width="0.55" /><path d="M429.8 241.5L429.8 272.2" stroke="#9a9a9e" stroke-width="0.4" /><path d="M427.7 242.5L427.7 271.2" stroke="#c4c0c4" stroke-width="0.35" stroke-dasharray="0.6 5"/><rect x="424.0" y="272.2" width="7.4" height="3" rx="0" stroke="#8a8a8e" stroke-width="0.5" fill="#fff"/><path d="M443.6 242L443.6 272.5" stroke="#5a5a5e" stroke-width="0.55" /><path d="M444.4 242L444.4 272.5" stroke="#9a9a9e" stroke-width="0.4" /><path d="M449.4 242L449.4 272.5" stroke="#5a5a5e" stroke-width="0.55" /><path d="M448.6 242L448.6 272.5" stroke="#9a9a9e" stroke-width="0.4" /><path d="M446.5 243L446.5 271.5" stroke="#c4c0c4" stroke-width="0.35" stroke-dasharray="0.6 5"/><path d="M464.20000000000005 241.5L464.20000000000005 272.2" stroke="#5a5a5e" stroke-width="0.55" /><path d="M465.0 241.5L465.0 272.2" stroke="#9a9a9e" stroke-width="0.4" /><path d="M470.0 241.5L470.0 272.2" stroke="#5a5a5e" stroke-width="0.55" /><path d="M469.20000000000005 241.5L469.20000000000005 272.2" stroke="#9a9a9e" stroke-width="0.4" /><path d="M467.1 242.5L467.1 271.2" stroke="#c4c0c4" stroke-width="0.35" stroke-dasharray="0.6 5"/><rect x="463.40000000000003" y="272.2" width="7.4" height="3" rx="0" stroke="#8a8a8e" stroke-width="0.5" fill="#fff"/><path d="M484.6 242L484.6 272.5" stroke="#5a5a5e" stroke-width="0.55" /><path d="M485.4 242L485.4 272.5" stroke="#9a9a9e" stroke-width="0.4" /><path d="M490.4 242L490.4 272.5" stroke="#5a5a5e" stroke-width="0.55" /><path d="M489.6 242L489.6 272.5" stroke="#9a9a9e" stroke-width="0.4" /><path d="M487.5 243L487.5 271.5" stroke="#c4c0c4" stroke-width="0.35" stroke-dasharray="0.6 5"/><path d="M503.40000000000003 241L503.40000000000003 271.3" stroke="#5a5a5e" stroke-width="0.55" /><path d="M504.2 241L504.2 271.3" stroke="#9a9a9e" stroke-width="0.4" /><path d="M509.2 241L509.2 271.3" stroke="#5a5a5e" stroke-width="0.55" /><path d="M508.40000000000003 241L508.40000000000003 271.3" stroke="#9a9a9e" stroke-width="0.4" /><path d="M506.3 242L506.3 270.3" stroke="#c4c0c4" stroke-width="0.35" stroke-dasharray="0.6 5"/><rect x="502.6" y="237.5" width="7.4" height="3.5" rx="0" stroke="#8a8a8e" stroke-width="0.5" fill="#fff"/><rect x="502.6" y="271.3" width="7.4" height="3.5" rx="0" stroke="#8a8a8e" stroke-width="0.5" fill="#fff"/><path d="M424.8 293L424.8 321.5" stroke="#5a5a5e" stroke-width="0.55" /><path d="M425.59999999999997 293L425.59999999999997 321.5" stroke="#9a9a9e" stroke-width="0.4" /><path d="M430.59999999999997 293L430.59999999999997 321.5" stroke="#5a5a5e" stroke-width="0.55" /><path d="M429.8 293L429.8 321.5" stroke="#9a9a9e" stroke-width="0.4" /><path d="M427.7 294L427.7 320.5" stroke="#c4c0c4" stroke-width="0.35" stroke-dasharray="0.6 5"/><rect x="424.0" y="321.5" width="7.4" height="3" rx="0" stroke="#8a8a8e" stroke-width="0.5" fill="#fff"/><path d="M443.6 293L443.6 323.5" stroke="#5a5a5e" stroke-width="0.55" /><path d="M444.4 293L444.4 323.5" stroke="#9a9a9e" stroke-width="0.4" /><path d="M449.4 293L449.4 323.5" stroke="#5a5a5e" stroke-width="0.55" /><path d="M448.6 293L448.6 323.5" stroke="#9a9a9e" stroke-width="0.4" /><path d="M446.5 294L446.5 322.5" stroke="#c4c0c4" stroke-width="0.35" stroke-dasharray="0.6 5"/><path d="M484.6 293L484.6 323.5" stroke="#5a5a5e" stroke-width="0.55" /><path d="M485.4 293L485.4 323.5" stroke="#9a9a9e" stroke-width="0.4" /><path d="M490.4 293L490.4 323.5" stroke="#5a5a5e" stroke-width="0.55" /><path d="M489.6 293L489.6 323.5" stroke="#9a9a9e" stroke-width="0.4" /><path d="M487.5 294L487.5 322.5" stroke="#c4c0c4" stroke-width="0.35" stroke-dasharray="0.6 5"/><path d="M503.40000000000003 296L503.40000000000003 322" stroke="#5a5a5e" stroke-width="0.55" /><path d="M504.2 296L504.2 322" stroke="#9a9a9e" stroke-width="0.4" /><path d="M509.2 296L509.2 322" stroke="#5a5a5e" stroke-width="0.55" /><path d="M508.40000000000003 296L508.40000000000003 322" stroke="#9a9a9e" stroke-width="0.4" /><path d="M506.3 297L506.3 321" stroke="#c4c0c4" stroke-width="0.35" stroke-dasharray="0.6 5"/><rect x="502.6" y="292.5" width="7.4" height="3.5" rx="0" stroke="#8a8a8e" stroke-width="0.5" fill="#fff"/><rect x="502.6" y="322" width="7.4" height="3.5" rx="0" stroke="#8a8a8e" stroke-width="0.5" fill="#fff"/><path d="M444.4 238.5a2 1.2 0 0 1 4 0" stroke="#b0a8b0" stroke-width="0.4" fill="none"/><path d="M444.4 278.5a2 1.2 0 0 1 4 0" stroke="#b0a8b0" stroke-width="0.4" fill="none"/><path d="M485.5 238.5a2 1.2 0 0 1 4 0" stroke="#b0a8b0" stroke-width="0.4" fill="none"/><path d="M485.5 278.5a2 1.2 0 0 1 4 0" stroke="#b0a8b0" stroke-width="0.4" fill="none"/><path d="M406.4 242L406.4 273.5" stroke="#666" stroke-width="0.5" /><path d="M408.6 242L408.6 273.5" stroke="#666" stroke-width="0.5" /><path d="M407.5 243L407.5 272.5" stroke="#c0bcc0" stroke-width="0.35" stroke-dasharray="0.6 4"/><path d="M406.4 293L406.4 325" stroke="#666" stroke-width="0.5" /><path d="M408.6 293L408.6 325" stroke="#666" stroke-width="0.5" /><path d="M407.5 294L407.5 324" stroke="#c0bcc0" stroke-width="0.35" stroke-dasharray="0.6 4"/><rect x="522.4" y="246" width="3.6" height="21.3" rx="0" stroke="#8a8a8e" stroke-width="0.5" fill="#cfc9cf"/><path d="M523.6 247v19M524.8 247v19" stroke="#b0aab0" stroke-width="0.3" fill="none"/><rect x="522.3" y="297" width="4" height="29" rx="0" stroke="#777" stroke-width="0.5" fill="#d8d2d6"/><path d="M524.3 298L524.3 325" stroke="#999" stroke-width="0.5" /><circle cx="524.3" cy="293.7" r="1.5" stroke="#8a8a8e" stroke-width="0.45" fill="none"/><circle cx="524.3" cy="322.8" r="1.5" stroke="#8a8a8e" stroke-width="0.45" fill="none"/><rect x="405.5" y="278" width="6.1" height="11" rx="0" stroke="#4a1826" stroke-width="0.5" fill="#7a2636"/><rect x="406.6" y="279.2" width="2.0" height="8.6" rx="0" stroke="#f4e8ec" stroke-width="0" fill="#f4e8ec"/><path d="M410 279L410 288" stroke="#e0c8d0" stroke-width="0.4" /><rect x="425" y="280.8" width="4.6" height="5.8" rx="1.2" stroke="#3a3a3a" stroke-width="0.65" fill="none"/><path d="M425 283.7L429.6 283.7" stroke="#3a3a3a" stroke-width="0.55" /><rect x="466.5" y="280.8" width="4.6" height="5.8" rx="1.2" stroke="#3a3a3a" stroke-width="0.65" fill="none"/><path d="M466.5 283.7L471.1 283.7" stroke="#3a3a3a" stroke-width="0.55" /><rect x="503.6" y="280.8" width="4.6" height="5.8" rx="1.2" stroke="#3a3a3a" stroke-width="0.65" fill="none"/><path d="M503.6 283.7L508.20000000000005 283.7" stroke="#3a3a3a" stroke-width="0.55" /><path d="M529.5 277v2.5M529.5 282v2.5M529.5 287v2.5" stroke="#aaa" stroke-width="0.5" fill="none"/><path d="M527 286l2-2M527 290h3" stroke="#aaa" stroke-width="0.4" fill="none"/><rect x="461.9" y="293.2" width="10.6" height="10.6" rx="1.3" stroke="#333" stroke-width="0.9" fill="none"/><path d="M467.2 293.2L467.2 303.8" stroke="#333" stroke-width="0.8" /><path d="M461.9 298.5L472.5 298.5" stroke="#333" stroke-width="0.8" /><rect x="461.9" y="308.7" width="10.6" height="10.6" rx="1.3" stroke="#333" stroke-width="0.9" fill="none"/><path d="M467.2 308.7L467.2 319.3" stroke="#333" stroke-width="0.8" /><path d="M461.9 314.0L472.5 314.0" stroke="#333" stroke-width="0.8" /><path d="M406 334.5H415M418.5 334.5H433.5L447 348V359" stroke="#6a6a6e" stroke-width="0.7" fill="none"/><path d="M415 334.5v3h3.5v-3" stroke="#8a8a8e" stroke-width="0.5" fill="none"/><path d="M406 340.5h3.5v3h2.5v4h-2.5v3h-3.5" stroke="#8a8a8e" stroke-width="0.5" fill="none"/><path d="M413.5 349v10M410 353h3.5" stroke="#8a8a8e" stroke-width="0.5" fill="none"/><path d="M406.5 353.5a2 2 0 0 1 3 0" stroke="#999" stroke-width="0.4" fill="none"/><rect x="418" y="349.5" width="2.8" height="5" rx="0" stroke="#b0b0b4" stroke-width="0.4" fill="none"/><rect x="422" y="349.5" width="2.8" height="5" rx="0" stroke="#b0b0b4" stroke-width="0.4" fill="none"/><path d="M424 337h2M428 337h2" stroke="#bbb" stroke-width="0.4" fill="none"/><path d="M445.5 352L445.5 355" stroke="#aaa" stroke-width="0.5" /><rect x="459.2" y="332" width="44.8" height="9.8" rx="0" stroke="#3a3a3a" stroke-width="0.8" fill="none"/><rect x="459.2" y="332" width="7.5" height="9.8" rx="0" stroke="#8a7070" stroke-width="0.5" fill="#bca09a"/><rect x="496.5" y="332" width="7.5" height="9.8" rx="0" stroke="#8a7070" stroke-width="0.5" fill="#c8aa9a"/><path d="M460 336.9h6M497 336.9h6" stroke="#fff" stroke-width="0.6" fill="none"/><path d="M462 332v9.8M464.5 332v9.8M499 332v9.8M501.5 332v9.8" stroke="#e8dcd8" stroke-width="0.4" fill="none"/><path d="M466.7 336.9L496.5 336.9" stroke="#333" stroke-width="0.9" /><path d="M481.5 332L481.5 341.8" stroke="#333" stroke-width="0.8" /><path d="M468 333.8h12M468 340h12M483 333.8h12M483 340h12" stroke="#aaa" stroke-width="0.4" fill="none"/><rect x="447" y="355" width="21.5" height="4.3" rx="0" stroke="#a08890" stroke-width="0.5" fill="#e2d0d6"/><rect x="468.7" y="354.2" width="42.5" height="5.2" rx="0" stroke="#7a6a70" stroke-width="0.6" fill="#f2ecee"/><path d="M469 356L511 356" stroke="#b09aa2" stroke-width="0.5" /><rect x="523" y="327" width="3.8" height="20" rx="0" stroke="#a08890" stroke-width="0.5" fill="#dcc4cc"/><path d="M517.5 354.5l6 2.5-6 2.5M524 354.5a5 5 0 0 0 0 5" stroke="#999" stroke-width="0.45" fill="none"/><path d="M520 352a4 4 0 0 1 7 1M520 362a4 4 0 0 0 7-1" stroke="#aaa" stroke-width="0.4" fill="none"/><rect x="406.2" y="362.5" width="73.6" height="28" rx="0" stroke="#8a8a8e" stroke-width="0.6" fill="none"/><path d="M480 362.5L480 390.5" stroke="#9a9a9e" stroke-width="0.5" /><path d="M480.5 361.5L487.5 371.5" stroke="#962444" stroke-width="0.8" /><path d="M480.5 383L487.5 393" stroke="#962444" stroke-width="0.8" /><path d="M484 366l2 5M484 388l2-5" stroke="#c06080" stroke-width="0.5" fill="none"/><path d="M480 373.5L480 381" stroke="#2a40c0" stroke-width="1.1" /><path d="M490 394v7M493 395l3 3" stroke="#aaa" stroke-width="0.5" fill="none"/></g></svg>
<div class="a" style="left:154px;top:450px;width:669px;height:7px;background:#252428;"></div>
<svg style="left:155.5px;top:451px;" width="30" height="5" viewBox="0 0 30 5" fill="none"><path d="M0.5 0.3v4.4" stroke="#c8c8cb" stroke-width="0.8"/><path d="M4.5 0.3L1.3 2.5l3.2 2.2z" fill="#c8c8cb"/><path d="M11.5 0.3L8.3 2.5l3.2 2.2z" fill="#c8c8cb"/><path d="M15.5 0.3l3.2 2.2-3.2 2.2z" fill="#c8c8cb"/><path d="M23.5 0.3l3.2 2.2-3.2 2.2z" fill="#c8c8cb"/><path d="M27.2 0.3v4.4" stroke="#c8c8cb" stroke-width="0.8"/></svg>
<svg style="left:186px;top:451px;" width="4" height="4" viewBox="0 0 4 4" fill="none"><rect x="0.4" y="0.4" width="3" height="3" stroke="#a0a0a3" stroke-width="0.6"/></svg>
<div class="t" style="left:193.7px;top:451.11px;font-size:5.3px;color:#c8c8cb;font-weight:400;">Model</div>
<div class="t" style="left:212.7px;top:451.11px;font-size:5.3px;color:#f0f0f2;font-weight:700;">Layout1</div>
<div class="t" style="left:236.2px;top:451.11px;font-size:5.3px;color:#c8c8cb;font-weight:400;">+</div>
<div class="a" style="left:0px;top:457px;width:823px;height:7px;background:#17171a;"></div>
<div class="t" style="left:343.6px;top:459.8px;font-size:5.2px;color:#c8c8cb;font-weight:400;text-shadow:0.4px 0 0 currentColor">9.7/16", 7 3/16", 0"</div>
<div class="t" style="left:394px;top:459.8px;font-size:5.2px;color:#c8c8cb;font-weight:400;text-shadow:0.4px 0 0 currentColor">style2</div>
<div class="t" style="left:416px;top:459.8px;font-size:5.2px;color:#c8c8cb;font-weight:400;text-shadow:0.4px 0 0 currentColor">WORKING</div>
<div class="t" style="left:447px;top:459.8px;font-size:5.2px;color:#c8c8cb;font-weight:400;text-shadow:0.4px 0 0 currentColor">Drafting</div>
<div class="t" style="left:474.5px;top:459.8px;font-size:5.2px;color:#6a6a6e;font-weight:400;text-shadow:0.4px 0 0 currentColor">SNAP</div>
<div class="t" style="left:496px;top:459.8px;font-size:5.2px;color:#6a6a6e;font-weight:400;text-shadow:0.4px 0 0 currentColor">GRID</div>
<div class="a" style="left:509.5px;top:459.2px;width:25.5px;height:6px;background:#46464a;"></div>
<div class="t" style="left:513.8px;top:459.8px;font-size:5.2px;color:#e0e0e2;font-weight:400;text-shadow:0.4px 0 0 currentColor">ORTHO</div>
<div class="t" style="left:537px;top:459.8px;font-size:5.2px;color:#6a6a6e;font-weight:400;text-shadow:0.4px 0 0 currentColor">POLAR</div>
<div class="a" style="left:559.8px;top:459.2px;width:21.200000000000045px;height:6px;background:#46464a;"></div>
<div class="t" style="left:562.5px;top:459.8px;font-size:5.2px;color:#e0e0e2;font-weight:400;text-shadow:0.4px 0 0 currentColor">ESNAP</div>
<div class="a" style="left:582.4px;top:459.2px;width:23.300000000000068px;height:6px;background:#46464a;"></div>
<div class="t" style="left:585px;top:459.8px;font-size:5.2px;color:#e0e0e2;font-weight:400;text-shadow:0.4px 0 0 currentColor">STRACK</div>
<div class="t" style="left:612px;top:459.8px;font-size:5.2px;color:#6a6a6e;font-weight:400;text-shadow:0.4px 0 0 currentColor">LWT</div>
<div class="t" style="left:627px;top:459.8px;font-size:5.2px;color:#c8c8cb;font-weight:400;text-shadow:0.4px 0 0 currentColor">PLayout1</div>
<div class="t" style="left:657.7px;top:459.8px;font-size:5.2px;color:#8a8a8e;font-weight:400;text-shadow:0.4px 0 0 currentColor">1:1</div>
<div class="a" style="left:667px;top:459.2px;width:20px;height:6px;background:#46464a;"></div>
<div class="t" style="left:670px;top:459.8px;font-size:5.2px;color:#e0e0e2;font-weight:400;text-shadow:0.4px 0 0 currentColor">DUCS</div>
<div class="a" style="left:688px;top:459.2px;width:15px;height:6px;background:#46464a;"></div>
<div class="t" style="left:691px;top:459.8px;font-size:5.2px;color:#e0e0e2;font-weight:400;text-shadow:0.4px 0 0 currentColor">DYN</div>
<div class="t" style="left:707px;top:459.8px;font-size:5.2px;color:#6a6a6e;font-weight:400;text-shadow:0.4px 0 0 currentColor">QUAD</div>
<div class="t" style="left:727px;top:459.8px;font-size:5.2px;color:#6a6a6e;font-weight:400;text-shadow:0.4px 0 0 currentColor">RT</div>
<div class="a" style="left:736.5px;top:459.2px;width:15.5px;height:6px;background:#46464a;"></div>
<div class="t" style="left:739.5px;top:459.8px;font-size:5.2px;color:#e0e0e2;font-weight:400;text-shadow:0.4px 0 0 currentColor">HKA</div>
<div class="t" style="left:757px;top:459.8px;font-size:5.2px;color:#6a6a6e;font-weight:400;text-shadow:0.4px 0 0 currentColor">LOCKUI</div>
<div class="t" style="left:782px;top:459.8px;font-size:5.2px;color:#c8c8cb;font-weight:400;text-shadow:0.4px 0 0 currentColor">None</div>
<svg style="left:797px;top:461px;" width="4" height="3" viewBox="0 0 4 3" fill="none"><path d="M0.3 0.5L2 2.2L3.7 0.5" stroke="#bdbdc0" stroke-width="0.7"/></svg>
<div class="a" style="left:675px;top:46px;width:140px;height:237px;background:#2a2b30;border:1px solid #3c3d42;box-sizing:border-box;border-radius:2px;box-shadow:-1px 1px 2px rgba(0,0,0,0.35)"></div>
<div class="t" style="left:682.8px;top:54.73px;font-size:7.2px;color:#ececee;font-weight:400;text-shadow:0 0 0.3px #fff">Interface Settings</div>
<div class="t" style="left:682.8px;top:68.78px;font-size:5.65px;color:#e4e4e6;font-weight:400;text-shadow:0.45px 0 0 currentColor">Layout</div>
<div class="a" style="left:682.4px;top:77.2px;width:38.60000000000002px;height:28.299999999999997px;background:#3c3d43;border:1px solid #4c4d53;box-sizing:border-box;border-radius:2px;"></div>
<div class="t" style="left:501.70000000000005px;width:400px;text-align:center;top:96.25px;font-size:5.3px;color:#e8e8ea;font-weight:400;">Classic</div>
<svg style="left:694.7px;top:81.5px" width="14" height="9" viewBox="0 0 14 9" fill="none"><rect x="0.5" y="0.5" width="13" height="8" stroke="#727278" stroke-width="0.7"/><path d="M0.5 2.5h13" stroke="#727278" stroke-width="0.6"/><rect x="3" y="3.5" width="1.6" height="2.5" fill="#85858b"/><rect x="6" y="3.5" width="1.6" height="2.5" fill="#85858b"/><rect x="9" y="3.5" width="1.6" height="2.5" fill="#85858b"/><path d="M11 3.5v3M12.5 3.5v3" stroke="#707076" stroke-width="0.4"/></svg>
<div class="a" style="left:722.8px;top:77.2px;width:38.200000000000045px;height:28.299999999999997px;background:#263447;border:1px solid #3a5a88;box-sizing:border-box;border-radius:2px;"></div>
<div class="t" style="left:541.9px;width:400px;text-align:center;top:96.25px;font-size:5.3px;color:#e8e8ea;font-weight:400;">Modern</div>
<svg style="left:734.9px;top:81.5px" width="14" height="9" viewBox="0 0 14 9" fill="none"><rect x="0.5" y="0.5" width="13" height="8" stroke="#727278" stroke-width="0.7"/><path d="M0.5 2.5h13" stroke="#727278" stroke-width="0.6"/><rect x="3.5" y="3.5" width="1.6" height="2.5" fill="#85858b"/><rect x="6.5" y="3.5" width="1.6" height="2.5" fill="#85858b"/><rect x="9.5" y="3.5" width="1.6" height="2.5" fill="#85858b"/></svg>
<div class="a" style="left:763px;top:77.2px;width:37.799999999999955px;height:28.299999999999997px;background:#2a2b30;border:1px solid #404146;box-sizing:border-box;border-radius:2px;"></div>
<div class="t" style="left:581.9px;width:400px;text-align:center;top:96.25px;font-size:5.3px;color:#e8e8ea;font-weight:400;">Toolbars</div>
<svg style="left:774.9px;top:81.5px" width="14" height="9" viewBox="0 0 14 9" fill="none"><rect x="0.5" y="0.5" width="13" height="8" stroke="#727278" stroke-width="0.7"/><path d="M0.5 3h13M0.5 5h13" stroke="#727278" stroke-width="0.7"/></svg>
<svg style="left:699px;top:87px;" width="6" height="8" viewBox="0 0 6 8" fill="none"><path d="M0.5 0.5v6l1.6-1.4 1.2 2.5 1-0.5-1.2-2.4h2.2z" fill="#f4f4f4" stroke="#222" stroke-width="0.5"/></svg>
<div class="t" style="left:682.8px;top:111.28px;font-size:5.65px;color:#e4e4e6;font-weight:400;text-shadow:0.45px 0 0 currentColor">Ribbon</div>
<div class="a" style="left:682.4px;top:120px;width:58.39999999999998px;height:27.400000000000006px;background:#263447;border:1px solid #3a5a88;box-sizing:border-box;border-radius:2px;"></div>
<div class="t" style="left:511.5999999999999px;width:400px;text-align:center;top:138.65px;font-size:5.3px;color:#e8e8ea;font-weight:400;">Labels</div>
<svg style="left:704.1px;top:124.8px" width="15" height="7" viewBox="0 0 15 7" fill="none"><rect x="0.5" y="0.5" width="14" height="6" stroke="#727278" stroke-width="0.7"/><rect x="2.8" y="2.5" width="1.4" height="2" fill="#85858b"/><rect x="5.4" y="2.5" width="1.4" height="2" fill="#85858b"/><rect x="8.0" y="2.5" width="1.4" height="2" fill="#85858b"/><rect x="10.600000000000001" y="2.5" width="1.4" height="2" fill="#85858b"/></svg>
<div class="a" style="left:743.2px;top:120px;width:57.59999999999991px;height:27.400000000000006px;background:#2a2b30;border:1px solid #404146;box-sizing:border-box;border-radius:2px;"></div>
<div class="t" style="left:572.0px;width:400px;text-align:center;top:138.65px;font-size:5.3px;color:#e8e8ea;font-weight:400;">No labels</div>
<svg style="left:764.5px;top:124.8px" width="15" height="7" viewBox="0 0 15 7" fill="none"><rect x="0.5" y="0.5" width="14" height="6" stroke="#727278" stroke-width="0.7"/><rect x="2.8" y="2.5" width="1.4" height="2" fill="#85858b"/><rect x="5.4" y="2.5" width="1.4" height="2" fill="#85858b"/><rect x="8.0" y="2.5" width="1.4" height="2" fill="#85858b"/><rect x="10.600000000000001" y="2.5" width="1.4" height="2" fill="#85858b"/></svg>
<div class="t" style="left:682.8px;top:153.78px;font-size:5.65px;color:#e4e4e6;font-weight:400;text-shadow:0.45px 0 0 currentColor">Theme</div>
<div class="a" style="left:682.6px;top:162.3px;width:57.799999999999955px;height:27.899999999999977px;background:#263447;border:1px solid #3a5a88;box-sizing:border-box;border-radius:2px;"></div>
<div class="t" style="left:511.5px;width:400px;text-align:center;top:181.15px;font-size:5.3px;color:#e8e8ea;font-weight:400;">Dark</div>
<svg style="left:709px;top:165px" width="10" height="10" viewBox="0 0 10 10" fill="none"><path d="M3.5 1A4 4 0 1 0 9 6.5A3.3 3.3 0 0 1 3.5 1z" stroke="#7a7f8c" stroke-width="0.8"/></svg>
<div class="a" style="left:743.4px;top:162.3px;width:57.200000000000045px;height:27.899999999999977px;background:#2a2b30;border:1px solid #404146;box-sizing:border-box;border-radius:2px;"></div>
<div class="t" style="left:572.0px;width:400px;text-align:center;top:181.15px;font-size:5.3px;color:#e8e8ea;font-weight:400;">Light</div>
<svg style="left:767px;top:165px" width="10" height="10" viewBox="0 0 10 10" fill="none"><circle cx="5" cy="5" r="2.6" fill="#727278"/><path d="M5 0.5v1.3M5 8.2v1.3M0.5 5h1.3M8.2 5h1.3M1.8 1.8l0.9 0.9M7.3 7.3l0.9 0.9M1.8 8.2l0.9-0.9M7.3 2.7l0.9-0.9" stroke="#727278" stroke-width="0.7"/></svg>
<div class="t" style="left:682.8px;top:196.28px;font-size:5.65px;color:#e4e4e6;font-weight:400;text-shadow:0.45px 0 0 currentColor">Panel system</div>
<div class="a" style="left:682.6px;top:204.8px;width:38.10000000000002px;height:27.799999999999983px;background:#263447;border:1px solid #3a5a88;box-sizing:border-box;border-radius:2px;"></div>
<div class="t" style="left:501.6500000000001px;width:400px;text-align:center;top:223.65px;font-size:5.3px;color:#e8e8ea;font-weight:400;">Docked</div>
<svg style="left:694.7px;top:209px" width="14" height="9" viewBox="0 0 14 9" fill="none"><rect x="0.5" y="0.5" width="13" height="8" stroke="#727278" stroke-width="0.7"/><rect x="1" y="1" width="7.5" height="7" fill="#1c1d22"/><path d="M8.5 0.5v8" stroke="#727278" stroke-width="0.6"/></svg>
<div class="a" style="left:723.4px;top:204.8px;width:37.0px;height:27.799999999999983px;background:#2a2b30;border:1px solid #404146;box-sizing:border-box;border-radius:2px;"></div>
<div class="t" style="left:541.9px;width:400px;text-align:center;top:223.65px;font-size:5.3px;color:#e8e8ea;font-weight:400;">Floating</div>
<svg style="left:734.9px;top:209px" width="14" height="9" viewBox="0 0 14 9" fill="none"><rect x="0.5" y="0.5" width="13" height="8" stroke="#727278" stroke-width="0.7"/><rect x="8" y="1.8" width="4" height="4" fill="#4a4a50"/></svg>
<div class="a" style="left:763.3px;top:204.8px;width:37.30000000000007px;height:27.799999999999983px;background:#2a2b30;border:1px solid #404146;box-sizing:border-box;border-radius:2px;"></div>
<div class="t" style="left:581.95px;width:400px;text-align:center;top:223.65px;font-size:5.3px;color:#e8e8ea;font-weight:400;">Tabbed</div>
<svg style="left:775.0px;top:209px" width="14" height="9" viewBox="0 0 14 9" fill="none"><rect x="0.5" y="0.5" width="13" height="8" stroke="#727278" stroke-width="0.7"/><rect x="8.5" y="0.5" width="5" height="8" fill="#45454a"/><path d="M8.5 3h5" stroke="#727278" stroke-width="0.6"/></svg>
<div class="t" style="left:682.8px;top:237.88px;font-size:5.65px;color:#e4e4e6;font-weight:400;text-shadow:0.45px 0 0 currentColor">General</div>
<div class="a" style="left:682.6px;top:248.3px;width:10.6px;height:5.4px;border-radius:3px;background:#2f7fe6"></div>
<div class="a" style="left:688.3px;top:249.2px;width:3.8px;height:3.8px;border-radius:2px;background:#f4f4f6"></div>
<div class="t" style="left:695.8px;top:249.07px;font-size:5.25px;color:#e8e8ea;font-weight:400;">Show Status Bar</div>
<div class="a" style="left:682.6px;top:257.3px;width:10.6px;height:5.4px;border-radius:3px;background:#1c1c1f;border:0.6px solid #8a8a8e;box-sizing:border-box"></div>
<div class="a" style="left:683.4px;top:258.1px;width:3.8px;height:3.8px;border-radius:2px;background:#f4f4f6"></div>
<div class="t" style="left:695.8px;top:258.07px;font-size:5.25px;color:#e8e8ea;font-weight:400;">Show Command line</div>
<svg style="left:682.6px;top:269.5px;" width="9" height="6" viewBox="0 0 9 6" fill="none"><path d="M0.5 1.2h8M0.5 3h8M0.5 4.8h8" stroke="#5a6a8a" stroke-width="0.6"/><circle cx="2.5" cy="1.2" r="0.8" fill="#5a6a8a"/><circle cx="6" cy="3" r="0.8" fill="#5a6a8a"/><circle cx="3.5" cy="4.8" r="0.8" fill="#5a6a8a"/></svg>
<div class="t" style="left:693px;top:270.36px;font-size:5.27px;color:#3d62aa;font-weight:400;">Customize ribbon</div>
</div></div>
</body></html>
